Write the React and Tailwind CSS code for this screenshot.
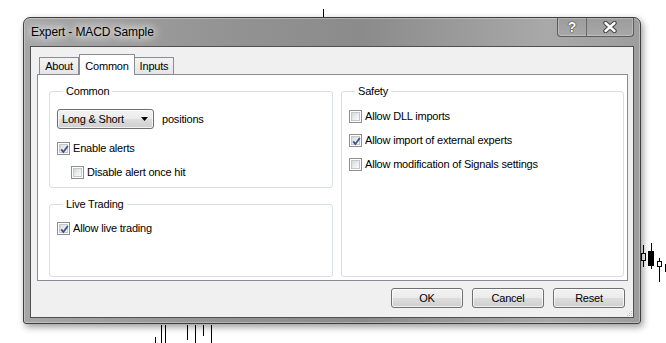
import React from "react";

const Check = () => (
  <svg width="13" height="13" viewBox="0 0 13 13" className="absolute left-0 top-0">
    <path d="M3.2 6.4 L5.4 9 L9.8 3" fill="none" stroke="#3b5894" strokeWidth="1.9" />
  </svg>
);

const CheckBox = ({ checked }) => (
  <span className="relative flex h-[13px] w-[13px] shrink-0 border border-[#8e8f8f] bg-white p-[1px]">
    <span className="flex-1 border border-[#c4c7cc] bg-[linear-gradient(135deg,#d4d6d9,#eef0f1_60%,#fafafa)]" />
    {checked && <Check />}
  </span>
);

const Row = ({ checked, children, className = "" }) => (
  <div className={`flex h-[24px] items-center gap-[3px] ${className}`}>
    <CheckBox checked={checked} />
    <span>{children}</span>
  </div>
);

const Group = ({ title, className = "", children }) => (
  <fieldset className={`rounded-[3px] border border-[#d5dfe5] px-[7px] ${className}`}>
    <legend className="ml-[6px] px-[3px] leading-[13px]">{title}</legend>
    {children}
  </fieldset>
);

const Button = ({ children }) => (
  <button className="h-[20px] w-[72px] rounded-[3px] border border-[#707070] bg-[linear-gradient(#f2f2f2,#ebebeb_50%,#dddddd_51%,#cfcfcf)] shadow-[inset_0_0_0_1px_rgba(255,255,255,0.7)]">
    {children}
  </button>
);

const Chart = () => (
  <svg width="666" height="343" className="absolute left-0 top-0" shapeRendering="crispEdges">
    <g stroke="#000" strokeWidth="1">
      <line x1="323.5" y1="9" x2="323.5" y2="18" />
      <line x1="155.5" y1="337" x2="155.5" y2="343" />
      <line x1="161.5" y1="325" x2="161.5" y2="343" />
      <line x1="165.5" y1="325" x2="165.5" y2="343" />
      <line x1="187.5" y1="325" x2="187.5" y2="340" />
      <line x1="195.5" y1="325" x2="195.5" y2="343" />
      <line x1="203.5" y1="325" x2="203.5" y2="336" />
      <line x1="211.5" y1="325" x2="211.5" y2="343" />
      <line x1="643.5" y1="245" x2="643.5" y2="267" />
      <rect x="641.5" y="253.5" width="4" height="7" fill="#fff" />
      <line x1="651.5" y1="243" x2="651.5" y2="269" />
      <rect x="648.5" y="251.5" width="5" height="14" fill="#000" />
      <line x1="659.5" y1="258" x2="659.5" y2="282" />
      <rect x="657.5" y="261.5" width="4" height="5" fill="#fff" />
      <line x1="665.5" y1="264" x2="665.5" y2="272" />
    </g>
  </svg>
);

export default function App() {
  return (
    <div className="relative h-[343px] w-[666px] overflow-hidden bg-white font-['Liberation_Sans','Arial',sans-serif] text-[11px] tracking-[-0.2px] text-black">
      <Chart />

      <div className="absolute left-[23px] top-[17px] flex h-[307px] w-[618px] flex-col rounded-t-[7px] rounded-b-[3px] border border-[#3f3f3f] bg-[linear-gradient(to_right,#a6a6a6,#929292_35%,#8b8b8b_55%,#a9a9a9_85%,#9d9d9d)] px-[6px] pb-[5px] shadow-[inset_0_0_0_1px_rgba(255,255,255,0.3),2px_3px_7px_rgba(0,0,0,0.4)]">
        <div className="flex h-[28px] shrink-0 justify-between">
          <span className="self-center pl-[1px] text-[12px] tracking-[-0.1px] [text-shadow:0_0_6px_#f0f0f0,0_0_10px_#f0f0f0,0_0_14px_#e8e8e8]">
            Expert - MACD Sample
          </span>
          <div className="flex h-[19px] self-start overflow-hidden rounded-b-[4px] border border-t-0 border-[#5c5c5c] bg-[linear-gradient(#9c9c9c,#a8a8a8)] shadow-[inset_0_0_0_1px_rgba(255,255,255,0.25)]">
            <div className="flex w-[29px] items-center justify-center border-r border-[#6a6a6a] text-[14px] font-bold text-white [text-shadow:0_0_1px_#333,0_0_1px_#333,0_0_1px_#333]">
              ?
            </div>
            <div className="flex w-[46px] items-center justify-center">
              <svg width="14" height="12" viewBox="0 0 14 12">
                <path d="M2.5 2 L11.5 10 M11.5 2 L2.5 10" stroke="#444" strokeWidth="4.4" strokeLinecap="round" />
                <path d="M2.5 2 L11.5 10 M11.5 2 L2.5 10" stroke="#fff" strokeWidth="2.4" strokeLinecap="round" />
              </svg>
            </div>
          </div>
        </div>

        <div className="relative flex flex-1 flex-col border border-[#505050] bg-[#f0f0f0] pl-[6px] pr-[5px] pt-[7px]">
          <div className="relative z-10 -mb-[1px] flex h-[21px] items-end pl-[2px]">
            <div className="mb-[1px] flex h-[17px] w-[40px] items-center justify-center border border-b-0 border-[#898c95] bg-[linear-gradient(#f3f3f3,#e5e5e5)]">
              About
            </div>
            <div className="flex h-[21px] w-[56px] items-start justify-center border border-b-0 border-[#898c95] bg-white pt-[3px]">
              Common
            </div>
            <div className="mb-[1px] flex h-[17px] w-[39px] items-center justify-center border border-b-0 border-l-0 border-[#898c95] bg-[linear-gradient(#f3f3f3,#e5e5e5)]">
              Inputs
            </div>
          </div>

          <div className="grid h-[207px] grid-cols-[284px_283px] gap-[8px] border border-[#898c95] bg-white pb-[3px] pl-[11px] pr-[3px] pt-[10px]">
            <div className="flex flex-col gap-[10px]">
              <Group title="Common" className="pb-[3px]">
                <div className="box-content flex h-[26px] items-center gap-[8px] pt-[8px]">
                  <div className="flex h-[20px] w-[97px] items-center justify-between rounded-[3px] border border-[#707070] bg-[linear-gradient(#f2f2f2,#ebebeb_50%,#dddddd_51%,#cfcfcf)] pl-[4px] pr-[5px] shadow-[inset_0_0_0_1px_rgba(255,255,255,0.7)]">
                    <span>Long &amp; Short</span>
                    <svg width="7" height="4" viewBox="0 0 7 4">
                      <path d="M0 0 H7 L3.5 4 Z" fill="#000" />
                    </svg>
                  </div>
                  <span>positions</span>
                </div>
                <Row checked className="mt-[4px]">Enable alerts</Row>
                <Row className="pl-[14px]">Disable alert once hit</Row>
              </Group>
              <Group title="Live Trading" className="flex-1 pt-[5px]">
                <Row checked>Allow live trading</Row>
              </Group>
            </div>

            <Group title="Safety" className="pt-[6px]">
              <Row>Allow DLL imports</Row>
              <Row checked>Allow import of external experts</Row>
              <Row>Allow modification of Signals settings</Row>
            </Group>
          </div>

          <div className="mt-[7px] flex justify-end gap-[9px] pr-[3px]">
            <Button>OK</Button>
            <Button>Cancel</Button>
            <Button>Reset</Button>
          </div>

          <svg width="5" height="5" viewBox="0 0 5 5" className="absolute bottom-[1px] right-[1px]">
            <g fill="#b8b8b8">
              <rect x="4" y="0" width="1" height="1" />
              <rect x="2" y="2" width="1" height="1" />
              <rect x="4" y="2" width="1" height="1" />
              <rect x="0" y="4" width="1" height="1" />
              <rect x="2" y="4" width="1" height="1" />
              <rect x="4" y="4" width="1" height="1" />
            </g>
          </svg>
        </div>
      </div>
    </div>
  );
}
